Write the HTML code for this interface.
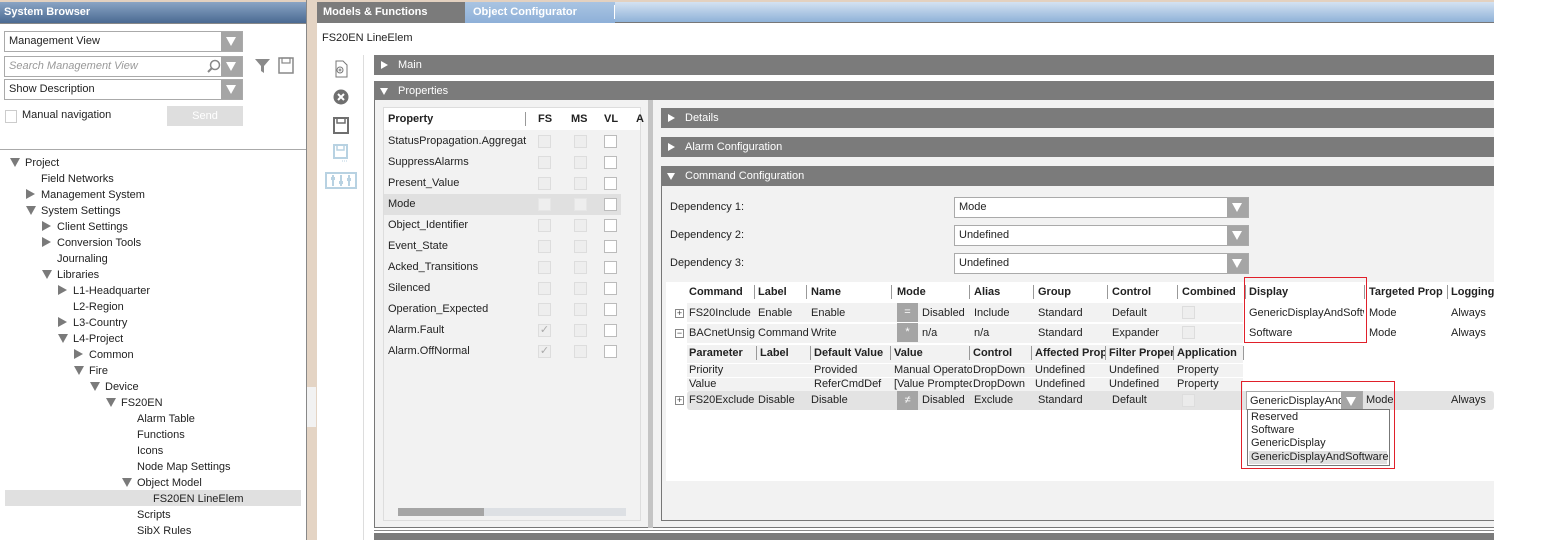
<!DOCTYPE html>
<html><head><meta charset="utf-8"><style>
*{margin:0;padding:0;box-sizing:border-box}
body{width:1541px;height:540px;position:relative;overflow:hidden;background:#fff;font-family:"Liberation Sans",sans-serif;font-size:11px;color:#222}
.a{position:absolute;white-space:nowrap}
.bar{position:absolute;background:#7b7b7b;color:#fff;font-size:11px;line-height:20px;padding-left:24px}
.bar:before{content:"";position:absolute;left:7px;top:6px;border-left:7px solid #fff;border-top:4px solid transparent;border-bottom:4px solid transparent}
.bar.o:before{left:6px;top:7px;border-top:7px solid #fff;border-left:4px solid transparent;border-right:4px solid transparent;border-bottom:0}
.t{position:absolute;white-space:nowrap;font-size:11px}
.tri{position:absolute;width:0;height:0}
.tr{border-left:9px solid #7a7a7a;border-top:5px solid transparent;border-bottom:5px solid transparent}
.td{border-top:9px solid #7a7a7a;border-left:5px solid transparent;border-right:5px solid transparent}
.cb{position:absolute;width:13px;height:13px;border:1px solid #ddd;background:#eee}
.cbw{position:absolute;width:13px;height:13px;border:1px solid #bbb;background:#fff}
.dd{position:absolute;height:21px;border:1px solid #aaa;background:#fff;line-height:19px;padding-left:4px}
.dd i{position:absolute;right:0;top:0;width:21px;height:19px;background:#a5a5a5}
.dd i:after{content:"";position:absolute;left:5px;top:5px;border-top:9px solid #fff;border-left:5px solid transparent;border-right:5px solid transparent}
.b{font-weight:bold}
.sep{position:absolute;width:1px;background:#999;height:14px}
.mb{position:absolute;width:21px;height:19px;background:#a5a5a5;color:#fff;text-align:center;line-height:19px;font-size:11px}
.pm{position:absolute;width:9px;height:9px;border:1px solid #888;font-size:9px;line-height:7px;text-align:center;color:#444}
.tree .t{margin-top:1px}
</style></head><body>
<div class="a" style="left:0;top:0;width:1494px;height:2px;background:#e3d1c0"></div>
<div class="a" style="left:306px;top:0;width:11px;height:540px;background:#e4d4c4"></div>
<div class="a" style="left:306px;top:0;width:1px;height:540px;background:#888"></div>
<div class="a" style="left:307px;top:387px;width:9px;height:40px;background:#f2f2f2"></div>
<div class="a b" style="left:0;top:2px;width:306px;height:21px;background:linear-gradient(#8aa4c4,#4a6a92);color:#fff;line-height:21px;padding-left:4px">System Browser</div>
<div class="a" style="left:0;top:23px;width:306px;height:1px;background:#888"></div>
<div class="dd" style="left:4px;top:31px;width:239px">Management View<i></i></div>
<div class="dd" style="left:4px;top:56px;width:239px;color:#999;font-style:italic">Search Management View<i></i>
<svg style="position:absolute;left:202px;top:2px" width="14" height="14"><circle cx="8" cy="6" r="4.5" fill="none" stroke="#888" stroke-width="1.5"/><line x1="5" y1="9" x2="1" y2="13" stroke="#888" stroke-width="2"/></svg></div>
<svg class="a" style="left:254px;top:58px" width="18" height="16"><path d="M1 1h15l-6 7v7l-3-2v-5z" fill="#8a8a8a"/></svg>
<svg class="a" style="left:278px;top:57px" width="16" height="17"><rect x="1" y="1" width="14" height="15" fill="none" stroke="#888" stroke-width="1.5"/><rect x="4" y="1" width="8" height="5" fill="none" stroke="#888" stroke-width="1.2"/></svg>
<div class="dd" style="left:4px;top:79px;width:239px">Show Description<i></i></div>
<div class="a" style="left:5px;top:110px;width:12px;height:13px;border:1px solid #ccc"></div>
<div class="t" style="left:22px;top:109px">Manual navigation</div>
<div class="a" style="left:167px;top:106px;width:76px;height:20px;background:#dedede;color:#fff;text-align:center;line-height:20px">Send</div>
<div class="a" style="left:0;top:149px;width:306px;height:1px;background:#aaa"></div>
<div class="a" style="left:5px;top:490px;width:296px;height:16px;background:#e0e0e0"></div>
<div class="tree">
<div class="tri td" style="left:10px;top:158px"></div><div class="t" style="left:25px;top:156px">Project</div>
<div class="t" style="left:41px;top:172px">Field Networks</div>
<div class="tri tr" style="left:26px;top:189px"></div><div class="t" style="left:41px;top:188px">Management System</div>
<div class="tri td" style="left:26px;top:206px"></div><div class="t" style="left:41px;top:204px">System Settings</div>
<div class="tri tr" style="left:42px;top:221px"></div><div class="t" style="left:57px;top:220px">Client Settings</div>
<div class="tri tr" style="left:42px;top:237px"></div><div class="t" style="left:57px;top:236px">Conversion Tools</div>
<div class="t" style="left:57px;top:252px">Journaling</div>
<div class="tri td" style="left:42px;top:270px"></div><div class="t" style="left:57px;top:268px">Libraries</div>
<div class="tri tr" style="left:58px;top:285px"></div><div class="t" style="left:73px;top:284px">L1-Headquarter</div>
<div class="t" style="left:73px;top:300px">L2-Region</div>
<div class="tri tr" style="left:58px;top:317px"></div><div class="t" style="left:73px;top:316px">L3-Country</div>
<div class="tri td" style="left:58px;top:334px"></div><div class="t" style="left:73px;top:332px">L4-Project</div>
<div class="tri tr" style="left:74px;top:349px"></div><div class="t" style="left:89px;top:348px">Common</div>
<div class="tri td" style="left:74px;top:366px"></div><div class="t" style="left:89px;top:364px">Fire</div>
<div class="tri td" style="left:90px;top:382px"></div><div class="t" style="left:105px;top:380px">Device</div>
<div class="tri td" style="left:106px;top:398px"></div><div class="t" style="left:121px;top:396px">FS20EN</div>
<div class="t" style="left:137px;top:412px">Alarm Table</div>
<div class="t" style="left:137px;top:428px">Functions</div>
<div class="t" style="left:137px;top:444px">Icons</div>
<div class="t" style="left:137px;top:460px">Node Map Settings</div>
<div class="tri td" style="left:122px;top:478px"></div><div class="t" style="left:137px;top:476px">Object Model</div>
<div class="t" style="left:153px;top:492px">FS20EN LineElem</div>
<div class="t" style="left:137px;top:508px">Scripts</div>
<div class="t" style="left:137px;top:524px">SibX Rules</div>
</div>
<div class="a" style="left:317px;top:2px;width:1177px;height:21px;background:linear-gradient(#d4e2f2,#8fb2d8);border-bottom:1px solid #777"></div>
<div class="a b" style="left:317px;top:2px;width:148px;height:21px;background:#7b7b7b;color:#fff;line-height:20px;padding-left:6px">Models &amp; Functions</div>
<div class="a b" style="left:465px;top:2px;width:150px;height:21px;background:linear-gradient(#a9c4e2,#8eb0d8);color:#fff;line-height:20px;padding-left:8px">Object Configurator</div>
<div class="a" style="left:614px;top:5px;width:1px;height:14px;background:#fff"></div>
<div class="t" style="left:322px;top:32px">FS20EN LineElem</div>
<svg class="a" style="left:333px;top:60px" width="16" height="18"><path d="M3 1h7l4 4v12H3z" fill="none" stroke="#777"/><circle cx="7" cy="10" r="3" fill="none" stroke="#777"/><path d="M7 8.5v3M5.5 10h3" stroke="#777"/></svg>
<svg class="a" style="left:333px;top:89px" width="16" height="16"><circle cx="8" cy="8" r="7.5" fill="#6f6f6f"/><path d="M5 5l6 6M11 5l-6 6" stroke="#fff" stroke-width="2"/></svg>
<svg class="a" style="left:333px;top:117px" width="16" height="17"><rect x="1" y="1" width="14" height="15" fill="none" stroke="#6f6f6f" stroke-width="2"/><rect x="4" y="1" width="8" height="5" fill="none" stroke="#6f6f6f" stroke-width="1.5"/></svg>
<svg class="a" style="left:333px;top:144px" width="16" height="18"><rect x="1" y="1" width="13" height="13" fill="none" stroke="#b8d2e2" stroke-width="2"/><rect x="4" y="1" width="7" height="5" fill="none" stroke="#b8d2e2" stroke-width="1.5"/><path d="M9 17h1M11 17h1M13 17h1" stroke="#b8d2e2"/></svg>
<svg class="a" style="left:325px;top:172px" width="32" height="17"><rect x="1" y="1" width="30" height="15" fill="none" stroke="#b8d2e2" stroke-width="2"/><path d="M8 3v11M16 3v11M24 3v11" stroke="#b8d2e2" stroke-width="2"/><rect x="6" y="5" width="4" height="3" fill="#b8d2e2"/><rect x="14" y="9" width="4" height="3" fill="#b8d2e2"/><rect x="22" y="6" width="4" height="3" fill="#b8d2e2"/></svg>
<div class="a" style="left:363px;top:55px;width:1px;height:485px;background:#ddd"></div>
<div class="bar" style="left:374px;top:55px;width:1120px;height:20px">Main</div>
<div class="bar o" style="left:374px;top:81px;width:1120px;height:19px">Properties</div>
<div class="a" style="left:374px;top:100px;width:1120px;height:428px;background:#f2f2f2;border-left:1px solid #777;border-bottom:1px solid #777"></div>
<div class="a" style="left:374px;top:533px;width:1120px;height:7px;background:#7b7b7b"></div>
<div class="a" style="left:374px;top:530px;width:1120px;height:1px;background:#888"></div>
<div class="a" style="left:383px;top:107px;width:258px;height:414px;border:1px solid #ddd;background:#f2f2f2"></div>
<div class="a" style="left:384px;top:108px;width:256px;height:22px;background:#fff"></div>
<div class="t b" style="left:388px;top:113px">Property</div>
<div class="sep" style="left:525px;top:112px"></div>
<div class="t b" style="left:538px;top:113px">FS</div>
<div class="t b" style="left:571px;top:113px">MS</div>
<div class="t b" style="left:604px;top:113px">VL</div>
<div class="t b" style="left:636px;top:113px">A</div>
<div class="a" style="left:384px;top:194px;width:237px;height:21px;background:#e0e0e0"></div>
<div class="a" style="left:399px;top:508px;width:227px;height:8px;background:#dde0e4"></div>
<div class="a" style="left:398px;top:508px;width:86px;height:8px;background:#a5a5a5"></div>
<div class="a" style="left:648px;top:100px;width:5px;height:428px;background:#c4c4c4"></div>
<div class="t" style="left:388px;top:135px">StatusPropagation.Aggregat</div>
<div class="t" style="left:388px;top:156px">SuppressAlarms</div>
<div class="t" style="left:388px;top:177px">Present_Value</div>
<div class="t" style="left:388px;top:198px">Mode</div>
<div class="t" style="left:388px;top:219px">Object_Identifier</div>
<div class="t" style="left:388px;top:240px">Event_State</div>
<div class="t" style="left:388px;top:261px">Acked_Transitions</div>
<div class="t" style="left:388px;top:282px">Silenced</div>
<div class="t" style="left:388px;top:303px">Operation_Expected</div>
<div class="t" style="left:388px;top:324px">Alarm.Fault</div>
<div class="t" style="left:388px;top:345px">Alarm.OffNormal</div>
<div class="cb" style="left:538px;top:135px"></div><div class="cb" style="left:574px;top:135px"></div><div class="cbw" style="left:604px;top:135px"></div>
<div class="cb" style="left:538px;top:156px"></div><div class="cb" style="left:574px;top:156px"></div><div class="cbw" style="left:604px;top:156px"></div>
<div class="cb" style="left:538px;top:177px"></div><div class="cb" style="left:574px;top:177px"></div><div class="cbw" style="left:604px;top:177px"></div>
<div class="cb" style="left:538px;top:198px;border-color:#e6e6e6"></div><div class="cb" style="left:574px;top:198px;border-color:#e6e6e6"></div><div class="cbw" style="left:604px;top:198px"></div>
<div class="cb" style="left:538px;top:219px"></div><div class="cb" style="left:574px;top:219px"></div><div class="cbw" style="left:604px;top:219px"></div>
<div class="cb" style="left:538px;top:240px"></div><div class="cb" style="left:574px;top:240px"></div><div class="cbw" style="left:604px;top:240px"></div>
<div class="cb" style="left:538px;top:261px"></div><div class="cb" style="left:574px;top:261px"></div><div class="cbw" style="left:604px;top:261px"></div>
<div class="cb" style="left:538px;top:282px"></div><div class="cb" style="left:574px;top:282px"></div><div class="cbw" style="left:604px;top:282px"></div>
<div class="cb" style="left:538px;top:303px"></div><div class="cb" style="left:574px;top:303px"></div><div class="cbw" style="left:604px;top:303px"></div>
<div class="cb" style="left:538px;top:324px;color:#aaa;font-size:11px;line-height:11px;text-align:center">✓</div><div class="cb" style="left:574px;top:324px"></div><div class="cbw" style="left:604px;top:324px"></div>
<div class="cb" style="left:538px;top:345px;color:#aaa;font-size:11px;line-height:11px;text-align:center">✓</div><div class="cb" style="left:574px;top:345px"></div><div class="cbw" style="left:604px;top:345px"></div>
<div class="bar" style="left:661px;top:108px;width:833px;height:20px">Details</div>
<div class="bar" style="left:661px;top:137px;width:833px;height:20px">Alarm Configuration</div>
<div class="bar o" style="left:661px;top:166px;width:833px;height:20px">Command Configuration</div>
<div class="a" style="left:661px;top:186px;width:833px;height:335px;border-left:1px solid #777;border-bottom:1px solid #777;background:#f2f2f2"></div>
<div class="t" style="left:670px;top:201px">Dependency 1:</div>
<div class="t" style="left:670px;top:229px">Dependency 2:</div>
<div class="t" style="left:670px;top:257px">Dependency 3:</div>
<div class="dd" style="left:954px;top:197px;width:295px">Mode<i></i></div>
<div class="dd" style="left:954px;top:225px;width:295px">Undefined<i></i></div>
<div class="dd" style="left:954px;top:253px;width:295px">Undefined<i></i></div>
<div class="a" style="left:666px;top:282px;width:828px;height:199px;background:#fff"></div>
<div class="t b" style="left:689px;top:286px">Command</div>
<div class="sep" style="left:754px;top:285px"></div><div class="t b" style="left:758px;top:286px">Label</div>
<div class="sep" style="left:806px;top:285px"></div><div class="t b" style="left:811px;top:286px">Name</div>
<div class="sep" style="left:891px;top:285px"></div><div class="t b" style="left:897px;top:286px">Mode</div>
<div class="sep" style="left:969px;top:285px"></div><div class="t b" style="left:974px;top:286px">Alias</div>
<div class="sep" style="left:1033px;top:285px"></div><div class="t b" style="left:1038px;top:286px">Group</div>
<div class="sep" style="left:1107px;top:285px"></div><div class="t b" style="left:1112px;top:286px">Control</div>
<div class="sep" style="left:1177px;top:285px"></div><div class="t b" style="left:1182px;top:286px">Combined</div>
<div class="sep" style="left:1245px;top:285px"></div><div class="t b" style="left:1249px;top:286px">Display</div>
<div class="sep" style="left:1364px;top:285px"></div><div class="t b" style="left:1369px;top:286px">Targeted Prop</div>
<div class="sep" style="left:1447px;top:285px"></div><div class="t b" style="left:1451px;top:286px">Logging</div>
<div class="a" style="left:687px;top:303px;width:556px;height:19px;background:#f2f2f2"></div>
<div class="a" style="left:687px;top:324px;width:556px;height:19px;background:#f2f2f2"></div>
<div class="pm" style="left:675px;top:309px">+</div>
<div class="t" style="left:689px;top:307px">FS20Include</div><div class="t" style="left:758px;top:307px">Enable</div><div class="t" style="left:811px;top:307px">Enable</div>
<div class="mb" style="left:897px;top:303px">=</div><div class="t" style="left:922px;top:307px">Disabled</div><div class="t" style="left:974px;top:307px">Include</div><div class="t" style="left:1038px;top:307px">Standard</div><div class="t" style="left:1112px;top:307px">Default</div>
<div class="cb" style="left:1182px;top:306px"></div>
<div class="t" style="left:1249px;top:307px;width:115px;overflow:hidden">GenericDisplayAndSoftware</div><div class="t" style="left:1369px;top:307px">Mode</div><div class="t" style="left:1451px;top:307px">Always</div>
<div class="pm" style="left:675px;top:329px">−</div>
<div class="t" style="left:689px;top:327px;width:66px;overflow:hidden">BACnetUnsigned</div><div class="t" style="left:758px;top:327px;width:50px;overflow:hidden">Command</div><div class="t" style="left:811px;top:327px">Write</div>
<div class="mb" style="left:897px;top:323px">*</div><div class="t" style="left:922px;top:327px">n/a</div><div class="t" style="left:974px;top:327px">n/a</div><div class="t" style="left:1038px;top:327px">Standard</div><div class="t" style="left:1112px;top:327px">Expander</div>
<div class="cb" style="left:1182px;top:326px"></div>
<div class="t" style="left:1249px;top:327px">Software</div><div class="t" style="left:1369px;top:327px">Mode</div><div class="t" style="left:1451px;top:327px">Always</div>
<div class="a" style="left:687px;top:345px;width:556px;height:18px;background:#f2f2f2"></div>
<div class="t b" style="left:689px;top:347px">Parameter</div>
<div class="sep" style="left:756px;top:346px"></div><div class="t b" style="left:760px;top:347px">Label</div>
<div class="sep" style="left:810px;top:346px"></div><div class="t b" style="left:814px;top:347px">Default Value</div>
<div class="sep" style="left:890px;top:346px"></div><div class="t b" style="left:894px;top:347px">Value</div>
<div class="sep" style="left:969px;top:346px"></div><div class="t b" style="left:973px;top:347px">Control</div>
<div class="sep" style="left:1031px;top:346px"></div><div class="t b" style="left:1035px;top:347px;width:70px;overflow:hidden">Affected Prop</div>
<div class="sep" style="left:1105px;top:346px"></div><div class="t b" style="left:1109px;top:347px;width:64px;overflow:hidden">Filter Property</div>
<div class="sep" style="left:1173px;top:346px"></div><div class="t b" style="left:1177px;top:347px">Application</div>
<div class="sep" style="left:1243px;top:346px"></div>
<div class="a" style="left:687px;top:364px;width:556px;height:13px;background:#f2f2f2"></div>
<div class="a" style="left:687px;top:378px;width:556px;height:13px;background:#f2f2f2"></div>
<div class="t" style="left:689px;top:364px">Priority</div><div class="t" style="left:814px;top:364px">Provided</div><div class="t" style="left:894px;top:364px;width:78px;overflow:hidden">Manual Operator</div><div class="t" style="left:973px;top:364px">DropDown</div><div class="t" style="left:1035px;top:364px">Undefined</div><div class="t" style="left:1109px;top:364px">Undefined</div><div class="t" style="left:1177px;top:364px">Property</div>
<div class="t" style="left:689px;top:378px">Value</div><div class="t" style="left:814px;top:378px">ReferCmdDef</div><div class="t" style="left:894px;top:378px;width:78px;overflow:hidden">[Value Prompted</div><div class="t" style="left:973px;top:378px">DropDown</div><div class="t" style="left:1035px;top:378px">Undefined</div><div class="t" style="left:1109px;top:378px">Undefined</div><div class="t" style="left:1177px;top:378px">Property</div>
<div class="a" style="left:687px;top:391px;width:807px;height:19px;background:#e3e3e3;border-radius:3px"></div>
<div class="pm" style="left:675px;top:396px">+</div>
<div class="t" style="left:689px;top:394px">FS20Exclude</div><div class="t" style="left:758px;top:394px">Disable</div><div class="t" style="left:811px;top:394px">Disable</div>
<div class="mb" style="left:897px;top:391px">≠</div><div class="t" style="left:922px;top:394px">Disabled</div><div class="t" style="left:974px;top:394px">Exclude</div><div class="t" style="left:1038px;top:394px">Standard</div><div class="t" style="left:1112px;top:394px">Default</div>
<div class="cb" style="left:1182px;top:394px;background:#ebebeb"></div>
<div class="t" style="left:1366px;top:394px">Mode</div><div class="t" style="left:1451px;top:394px">Always</div>
<div class="dd" style="left:1246px;top:391px;width:117px;height:19px;line-height:18px;padding-left:3px;overflow:hidden">GenericDisplayAnd<i style="height:17px"></i></div>
<div class="a" style="left:1247px;top:409px;width:143px;height:57px;border:1px solid #777;background:#fff"></div>
<div class="a" style="left:1249px;top:451px;width:138px;height:13px;background:#e0e0e0"></div>
<div class="t" style="left:1251px;top:411px">Reserved</div>
<div class="t" style="left:1251px;top:424px">Software</div>
<div class="t" style="left:1251px;top:437px">GenericDisplay</div>
<div class="t" style="left:1251px;top:451px">GenericDisplayAndSoftware</div>
<div class="a" style="left:1244px;top:277px;width:123px;height:66px;border:1px solid #e0202a"></div>
<div class="a" style="left:1241px;top:381px;width:154px;height:88px;border:1px solid #e0202a"></div>
</body></html>
